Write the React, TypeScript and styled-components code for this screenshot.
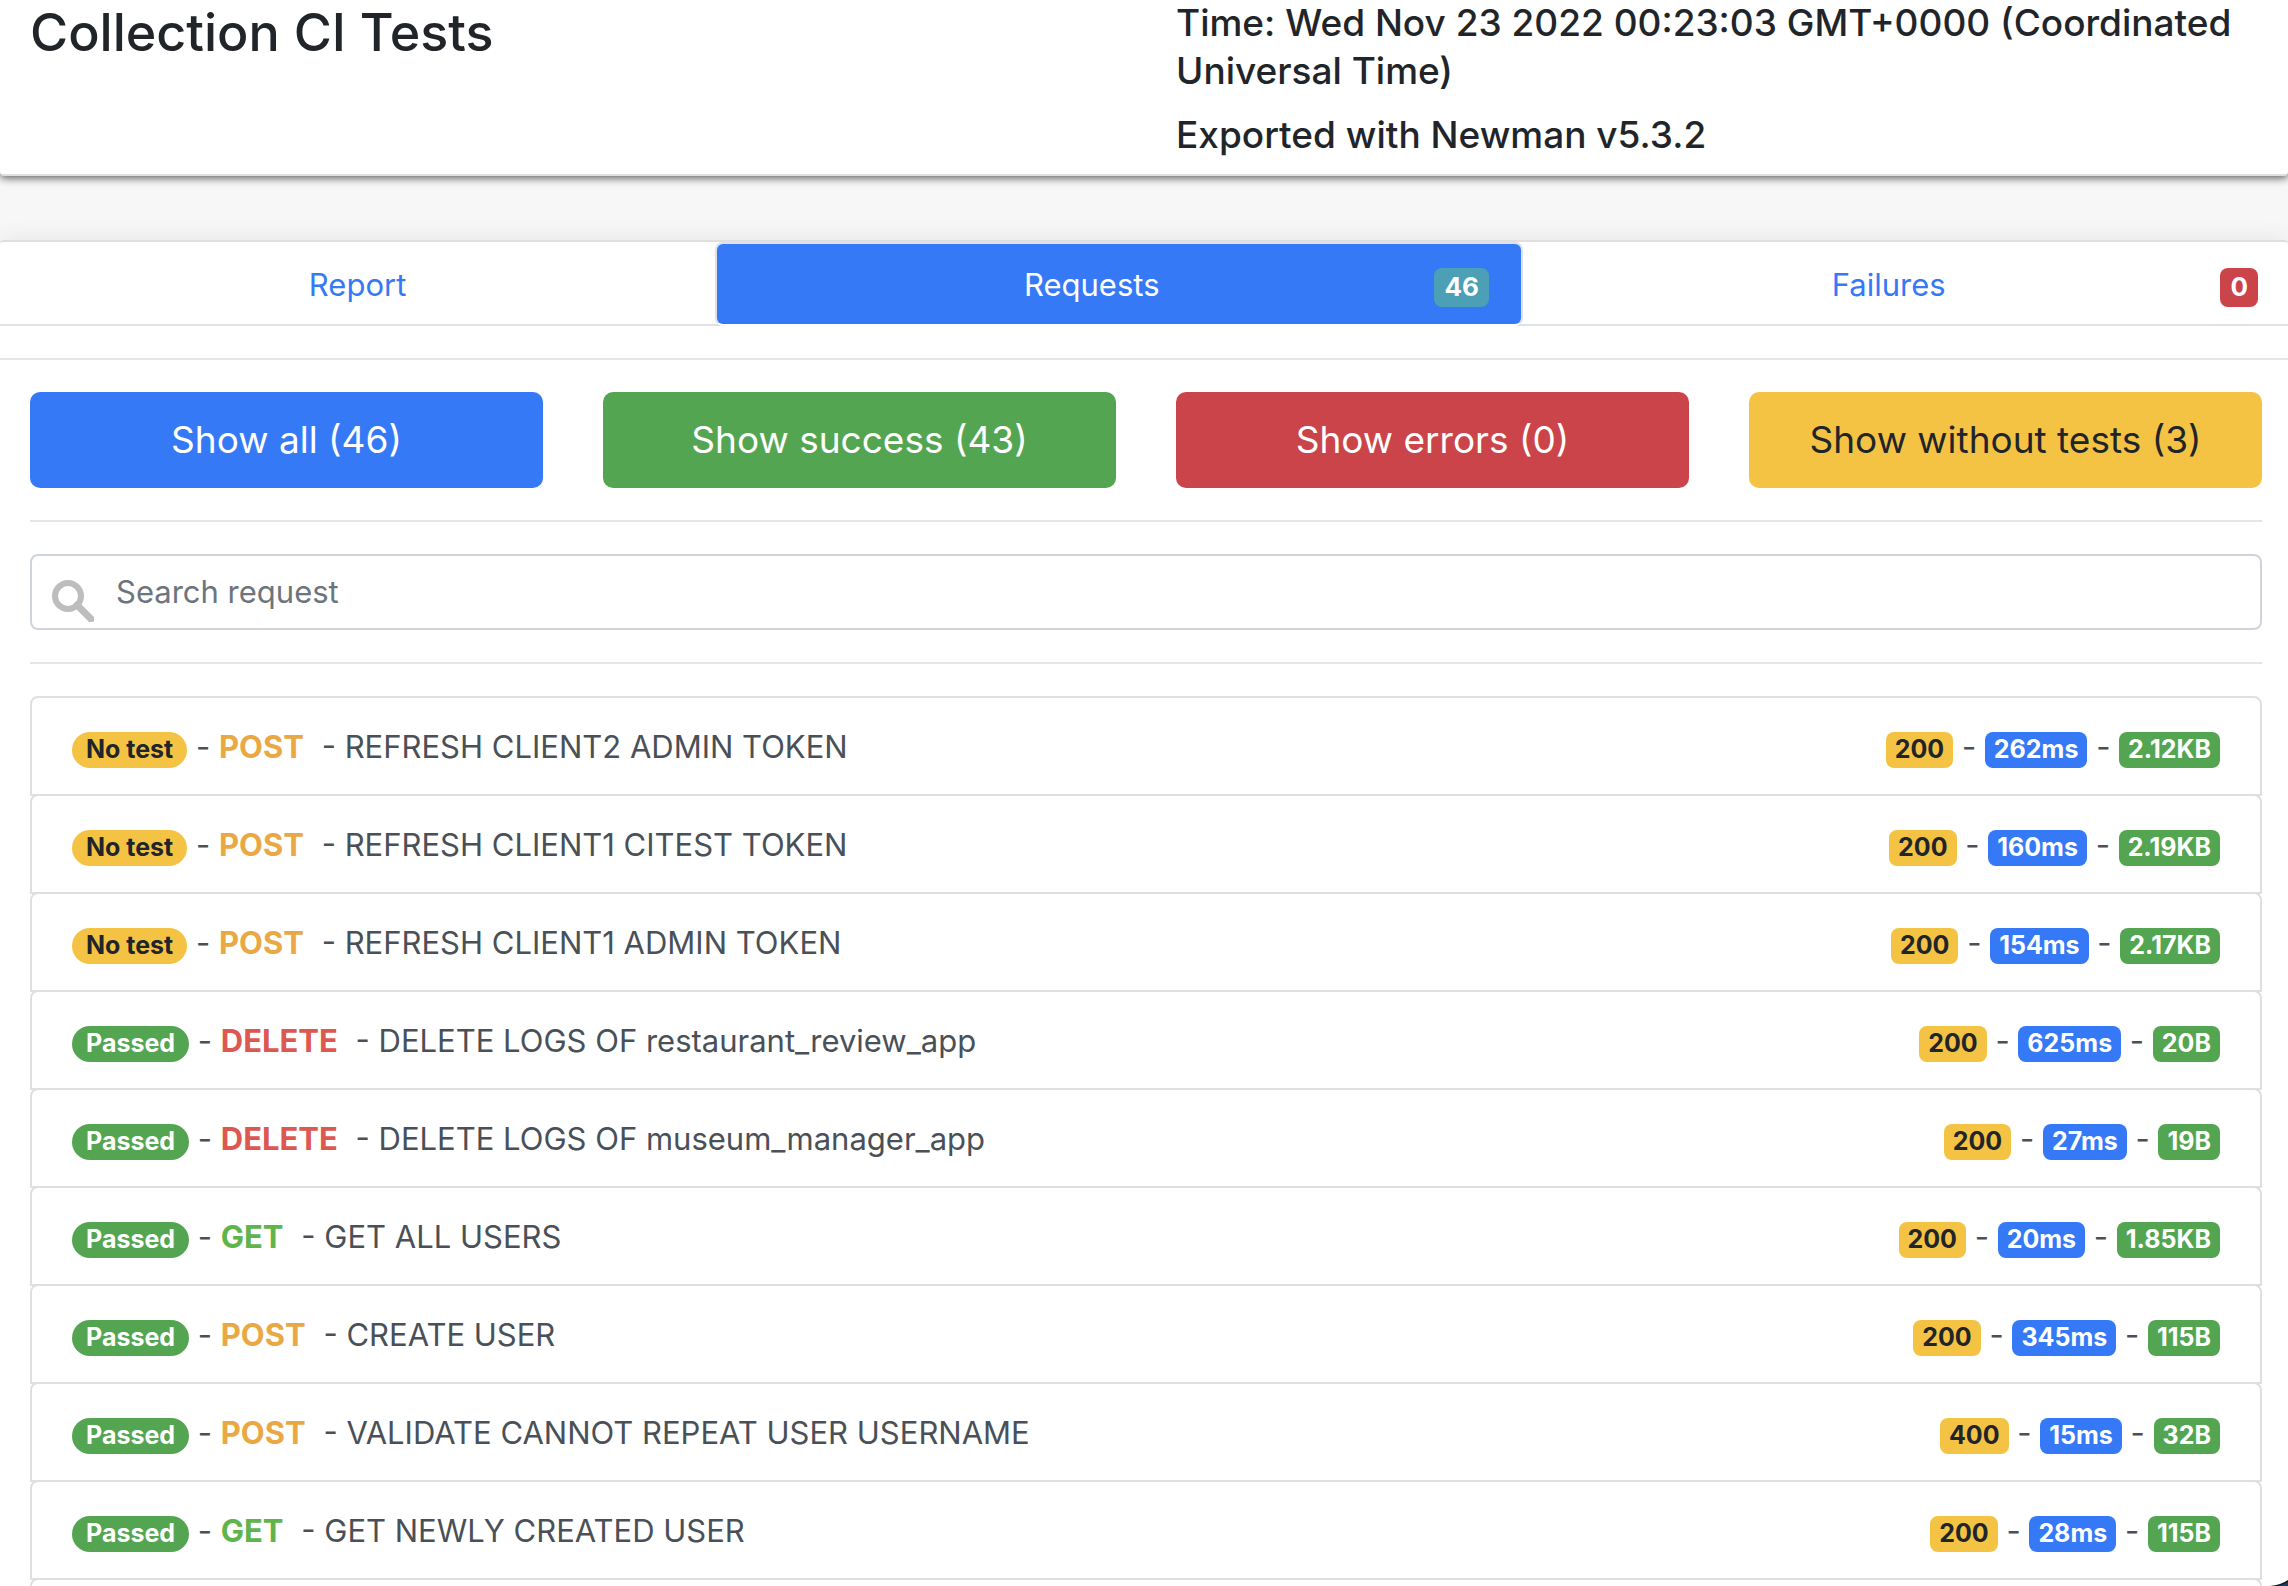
import React from "react";
import styled, { createGlobalStyle } from "styled-components";

const colors = {
  primary: "#3579f6",
  success: "#54a551",
  danger: "#ca444a",
  warning: "#f4c344",
  info: "#4c9fb5",
  dark: "#212529",
};

const GlobalStyle = createGlobalStyle`
  *, *::before, *::after { box-sizing: border-box; }
  body {
    margin: 0;
    background: #f7f7f7;
    color: ${colors.dark};
    font-family: Inter, "Liberation Sans", sans-serif;
    font-size: 31px;
    line-height: 48px;
  }
  html, body { overflow: hidden; height: 100%; }
`;

const Header = styled.header`
  display: grid;
  grid-template-columns: 1fr 1fr;
  column-gap: 60px;
  margin-top: -1px;
  padding: 0 26px 15px 30px;
  background: #fff;
  border-bottom: 2px solid #dfdfdf;
  border-radius: 0 0 4px 4px;
  box-shadow: 0 2px 8px rgba(0, 0, 0, 0.65);
`;

const Title = styled.h1`
  margin: 0;
  font-size: 52px;
  line-height: 68px;
  font-weight: 500;
`;

const Meta = styled.div`
  display: flex;
  flex-direction: column;
  gap: 16px;
`;

const MetaLine = styled.h2`
  margin: 0;
  font-size: 37px;
  line-height: 48px;
  font-weight: 500;
`;

const Panel = styled.main`
  margin-top: 64px;
  background: #fff;
  border-top: 2px solid #dfdfdf;
  border-radius: 4px 4px 0 0;
  box-shadow: 0 0 24px rgba(0, 0, 0, 0.08);
`;

const Tabs = styled.nav`
  display: flex;
  margin-right: -4px;
  border-bottom: 2px solid #dee2e6;
`;

const Tab = styled.a<{ $active?: boolean }>`
  flex: 1 1 auto;
  display: flex;
  align-items: baseline;
  margin-bottom: -2px;
  padding: 17px 32px 15px;
  border: 2px solid transparent;
  border-radius: 8px;
  text-decoration: none;
  color: ${(p) => (p.$active ? "#fff" : colors.primary)};
  ${(p) =>
    p.$active &&
    `background: ${colors.primary}; border-color: #dee2e6 #dee2e6 #fff;`}
`;

const TabLabel = styled.span`
  flex: 1;
  text-align: center;
`;

const Badge = styled.span<{ $bg: string; $fg?: string; $pill?: boolean }>`
  display: inline-block;
  padding: ${(p) => (p.$pill ? "5px 14px 7px" : "5px 9px 7px")};
  border-radius: ${(p) => (p.$pill ? "18px" : "8px")};
  background: ${(p) => p.$bg};
  color: ${(p) => p.$fg || "#fff"};
  font-size: 25px;
  line-height: 24px;
  font-weight: 700;
`;

const TabBadge = styled(Badge)`
  padding: 5px 10px 7px;
  font-size: 26px;
  line-height: 27px;
`;

const Rule = styled.hr`
  margin: 32px 0;
  border: 0;
  border-top: 2px solid #e5e5e5;
`;

const Content = styled.div`
  padding: 0 26px 0 30px;
`;

const Filters = styled.div`
  display: grid;
  grid-template-columns: repeat(4, 1fr);
  gap: 60px;
`;

const FilterButton = styled.button<{ $bg: string; $fg?: string }>`
  height: 96px;
  padding: 0 16px;
  border: 0;
  border-radius: 10px;
  background: ${(p) => p.$bg};
  color: ${(p) => p.$fg || "#fff"};
  font-family: inherit;
  font-size: 37px;
  line-height: 60px;
`;

const SearchBox = styled.label`
  display: flex;
  align-items: center;
  gap: 22px;
  height: 76px;
  padding-left: 20px;
  background: #fff;
  border: 2px solid #ced4da;
  border-radius: 8px;
`;

const SearchIcon = styled.svg`
  flex: none;
  width: 42px;
  height: 42px;
  margin-top: 18px;
`;

const SearchInput = styled.input`
  flex: 1;
  min-width: 0;
  padding: 0;
  border: 0;
  outline: 0;
  background: transparent;
  color: #495057;
  font: inherit;
  &::placeholder { color: #6c757d; opacity: 1; }
`;

const RequestList = styled.ul`
  margin: 0;
  padding: 0;
  list-style: none;
`;

const RequestRow = styled.li`
  height: 100px;
  border: 2px solid #dfdfdf;
  border-radius: 8px 8px 0 0;
  background: #fff;
  & + & { margin-top: -2px; }
`;

const RequestLink = styled.a`
  display: flex;
  justify-content: space-between;
  padding: 25px 40px 23px;
  color: #495057;
  text-decoration: none;
  white-space: pre;
`;

const Method = styled.strong<{ $color: string }>`
  margin-right: 9px;
  color: ${(p) => p.$color};
  font-weight: 700;
`;

const WindowCorner = styled.svg`
  position: fixed;
  right: 0;
  bottom: 0;
  width: 18px;
  height: 6px;
`;

const methodColors: Record<string, string> = {
  POST: "#e9a844",
  DELETE: "#dd5850",
  GET: "#60b44c",
};

type Request = [method: string, name: string, status: string, time: string, size: string, tested?: boolean];

const requests: Request[] = [
  ["POST", "REFRESH CLIENT2 ADMIN TOKEN", "200", "262ms", "2.12KB", false],
  ["POST", "REFRESH CLIENT1 CITEST TOKEN", "200", "160ms", "2.19KB", false],
  ["POST", "REFRESH CLIENT1 ADMIN TOKEN", "200", "154ms", "2.17KB", false],
  ["DELETE", "DELETE LOGS OF restaurant_review_app", "200", "625ms", "20B"],
  ["DELETE", "DELETE LOGS OF museum_manager_app", "200", "27ms", "19B"],
  ["GET", "GET ALL USERS", "200", "20ms", "1.85KB"],
  ["POST", "CREATE USER", "200", "345ms", "115B"],
  ["POST", "VALIDATE CANNOT REPEAT USER USERNAME", "400", "15ms", "32B"],
  ["GET", "GET NEWLY CREATED USER", "200", "28ms", "115B"],
];

export default function App() {
  return (
    <>
      <GlobalStyle />
      <Header>
        <Title>Collection CI Tests</Title>
        <Meta>
          <MetaLine>Time: Wed Nov 23 2022 00:23:03 GMT+0000 (Coordinated Universal Time)</MetaLine>
          <MetaLine>Exported with Newman v5.3.2</MetaLine>
        </Meta>
      </Header>
      <Panel>
        <Tabs>
          <Tab href="#report"><TabLabel>Report</TabLabel></Tab>
          <Tab href="#requests" $active>
            <TabLabel>Requests</TabLabel>
            <TabBadge $bg={colors.info}>46</TabBadge>
          </Tab>
          <Tab href="#failures">
            <TabLabel>Failures</TabLabel>
            <TabBadge $bg={colors.danger}>0</TabBadge>
          </Tab>
        </Tabs>
        <Rule />
        <Content>
          <Filters>
            <FilterButton $bg={colors.primary}>Show all (46)</FilterButton>
            <FilterButton $bg={colors.success}>Show success (43)</FilterButton>
            <FilterButton $bg={colors.danger}>Show errors (0)</FilterButton>
            <FilterButton $bg={colors.warning} $fg={colors.dark}>Show without tests (3)</FilterButton>
          </Filters>
          <Rule />
          <SearchBox>
            <SearchIcon viewBox="0 0 42 42" fill="none" stroke="#bdbdbd" aria-hidden="true">
              <circle cx="16" cy="16" r="13" strokeWidth="6" />
              <path d="M25 25 L39 39" strokeWidth="7" strokeLinecap="round" />
            </SearchIcon>
            <SearchInput type="text" placeholder="Search request" aria-label="Search request" />
          </SearchBox>
          <Rule />
          <RequestList>
            {requests.map(([method, name, status, time, size, tested = true]) => (
              <RequestRow key={name}>
                <RequestLink href="#request">
                  <span>
                    <Badge $pill $bg={tested ? colors.success : colors.warning} $fg={tested ? "#fff" : colors.dark}>
                      {tested ? "Passed" : "No test"}
                    </Badge>
                    {" - "}
                    <Method $color={methodColors[method]}>{method}</Method>
                    {" - "}
                    {name}
                  </span>
                  <span>
                    <Badge $bg={colors.warning} $fg={colors.dark}>{status}</Badge>
                    {" - "}
                    <Badge $bg={colors.primary}>{time}</Badge>
                    {" - "}
                    <Badge $bg={colors.success}>{size}</Badge>
                  </span>
                </RequestLink>
              </RequestRow>
            ))}
            <RequestRow />
          </RequestList>
        </Content>
      </Panel>
      <WindowCorner viewBox="0 0 18 6" aria-hidden="true">
        <path d="M0 6 Q11 5 18 0 V6 Z" fill="#10141c" />
        <path d="M8 6 Q14 4 18 2 V6 Z" fill="#1f3a5f" />
      </WindowCorner>
    </>
  );
}
